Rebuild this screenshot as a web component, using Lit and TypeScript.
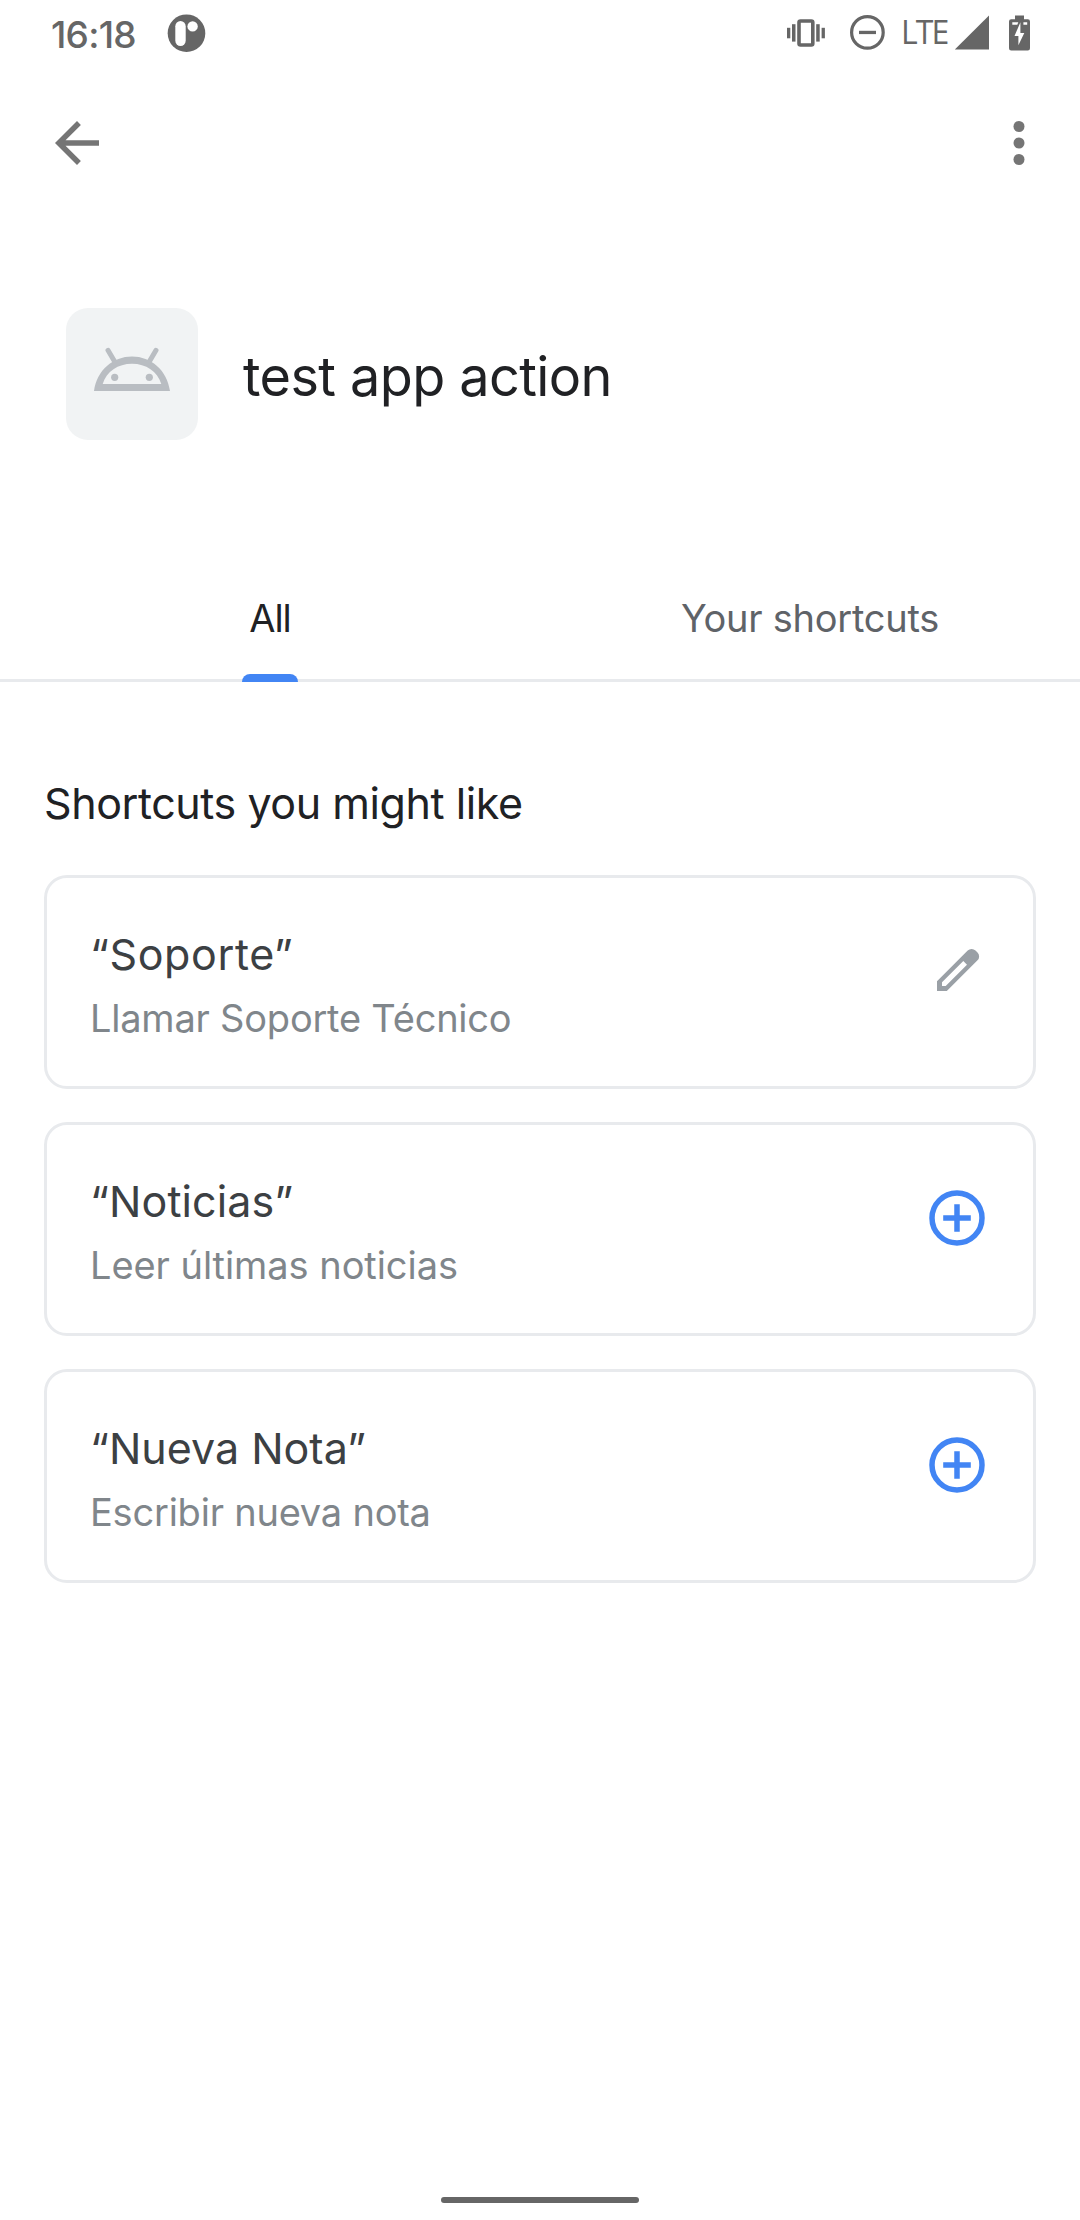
import { LitElement, html, css, svg } from "lit";
import { customElement, property, state } from "lit/decorators.js";
import { classMap } from "lit/directives/class-map.js";

interface Shortcut {
  phrase: string;
  detail: string;
  saved: boolean;
  fit: string;
}

const SHORTCUTS: Shortcut[] = [
  { phrase: "“Soporte”", detail: "Llamar Soporte Técnico", saved: true, fit: "wide" },
  { phrase: "“Noticias”", detail: "Leer últimas noticias", saved: false, fit: "normal" },
  { phrase: "“Nueva Nota”", detail: "Escribir nueva nota", saved: false, fit: "tight" },
];

@customElement("status-bar")
export class StatusBar extends LitElement {
  static styles = css`
    :host {
      display: flex;
      height: 66px;
      padding: 0 48px 0 51px;
      box-sizing: border-box;
      color: #666;
    }
    svg { display: block; fill: currentColor; }
    .side { display: flex; align-items: flex-start; }
    .end { margin-left: auto; }
    .time {
      width: 113px;
      font: 500 37px/69px Inter, "Liberation Sans", sans-serif;
      letter-spacing: -0.75px;
    }
    .dnd { margin-left: 20px; }
    .network {
      width: 51px;
      margin-left: 13px;
      font: 400 32px/63px "Open Sans", "Liberation Sans", sans-serif;
      letter-spacing: -1.9px;
      white-space: nowrap;
    }
    .battery { margin-left: 14px; }
  `;

  render() {
    return html`
      <div class="side">
        <span class="time">16:18</span>
        <svg width="46" height="66" viewBox="164 0 46 66">
          <circle cx="186.5" cy="33.2" r="18.8" />
          <rect x="175.3" y="21" width="10.4" height="25" rx="5.2" fill="#fff" />
          <circle cx="192.6" cy="26.4" r="5.2" fill="#fff" />
        </svg>
      </div>
      <div class="side end">
        <svg width="44" height="66" viewBox="784 0 44 66">
          <rect x="799" y="21" width="13.8" height="24" rx="1.5" fill="none" stroke="currentColor" stroke-width="3.6" />
          <rect x="787" y="27.8" width="3.3" height="10.5" />
          <rect x="792" y="24.2" width="3.5" height="17.4" />
          <rect x="816.2" y="24.2" width="3.5" height="17.4" />
          <rect x="821.6" y="27.8" width="3.3" height="10.5" />
        </svg>
        <svg class="dnd" width="40" height="66" viewBox="848 0 40 66">
          <circle cx="867.4" cy="32.4" r="15.8" fill="none" stroke="currentColor" stroke-width="3.2" />
          <rect x="859" y="30.8" width="17" height="3.3" />
        </svg>
        <span class="network">LTE</span>
        <svg width="40" height="66" viewBox="952 0 40 66">
          <path d="M954.8 49.5 989 15.5V49.5Z" />
        </svg>
        <svg class="battery" width="26" height="66" viewBox="1006 0 26 66">
          <path d="M1015 15.5h9v3.7h3.8q2.2 0 2.2 2.2v26.8q0 2.2-2.2 2.2h-16.6q-2.2 0-2.2-2.2V21.4q0-2.2 2.2-2.2h3.8Z" />
          <path fill="#fff" d="M1012.3 22.3h6l-1 2.4h-5ZM1023.4 22.3h3.8v2.4h-3.8ZM1020.4 22.3V33h3.9l-5.9 12.2V36h-3.9Z" />
        </svg>
      </div>
    `;
  }
}

@customElement("shortcut-card")
export class ShortcutCard extends LitElement {
  @property({ attribute: false }) item!: Shortcut;

  static styles = css`
    :host {
      display: flex;
      justify-content: space-between;
      height: 214px;
      padding: 48px 42px 0 43px;
      box-sizing: border-box;
      border: 3px solid #e8eaed;
      border-radius: 23px;
      white-space: nowrap;
    }
    .phrase { font-size: 43px; line-height: 57px; color: #3c4043; }
    .detail { margin-top: 11px; font-size: 38px; line-height: 48px; color: #80868b; }
    .phrase.wide { letter-spacing: 0.6px; }
    .phrase.normal { letter-spacing: 0.1px; }
    .detail.wide, .detail.tight { letter-spacing: -0.22px; }
    .detail.normal { letter-spacing: -0.06px; }
    .action { display: block; width: 66px; height: 66px; margin: 12px 1px 0 0; }
  `;

  private renderAction() {
    return this.item.saved
      ? svg`<path fill="#9aa0a6" fill-rule="evenodd" d="M13 53V43.2L43.7 12.5A5.5 5.5 0 0 1 51.5 12.5L53.5 14.5A5.5 5.5 0 0 1 53.5 22.3L22.8 53ZM18 48H21.7L43 26.7 39.3 23 18 44.3Z" />`
      : svg`<circle cx="33" cy="33" r="25" fill="none" stroke="#4285f4" stroke-width="5.5" />
          <path d="M33 19.2V46.8M19.2 33H46.8" stroke="#4285f4" stroke-width="5.5" />`;
  }

  render() {
    return html`
      <div>
        <div class="phrase ${this.item.fit}">${this.item.phrase}</div>
        <div class="detail ${this.item.fit}">${this.item.detail}</div>
      </div>
      <svg class="action" viewBox="0 0 66 66">${this.renderAction()}</svg>
    `;
  }
}

@customElement("app-root")
export class AppRoot extends LitElement {
  @state() private tab = 0;

  static styles = css`
    :host {
      display: flex;
      flex-direction: column;
      height: 2220px;
      background: #fff;
      color: #202124;
      font-family: Inter, "Liberation Sans", sans-serif;
    }
    .appbar { display: flex; justify-content: space-between; padding: 44px 28px 44px 44px; }
    .appbar svg { display: block; fill: #757575; }
    .hero { display: flex; align-items: center; gap: 45px; padding: 88px 66px 0; }
    .app-icon { display: flex; width: 132px; height: 132px; border-radius: 22px; background: #f1f3f4; }
    .title { margin: 6px 0 0; font-size: 54px; line-height: 72px; font-weight: 400; letter-spacing: -0.6px; }
    .tabs {
      display: grid;
      grid-template-columns: 1fr 1fr;
      height: 128px;
      margin-top: 114px;
      box-sizing: border-box;
      border-bottom: 3px solid #e8eaed;
    }
    .tab {
      position: relative;
      height: 128px;
      font-size: 38px;
      line-height: 128px;
      text-align: center;
      letter-spacing: -0.26px;
      color: #5f6368;
    }
    .tab.active { color: #202124; letter-spacing: -1px; }
    .tab.active::after {
      content: "";
      position: absolute;
      left: 50%;
      bottom: 0;
      width: 56px;
      height: 8px;
      margin-left: -28px;
      border-radius: 8px 8px 0 0;
      background: #4285f4;
    }
    .section { display: flex; flex-direction: column; padding: 93px 44px 0; }
    .heading { margin: 0 0 44px; font-size: 43px; line-height: 56px; font-weight: 400; letter-spacing: -0.43px; }
    .list { display: flex; flex-direction: column; gap: 33px; }
    .home { align-self: center; width: 198px; height: 6px; margin: auto 0 17px; border-radius: 3px; background: #666; }
  `;

  render() {
    return html`
      <status-bar></status-bar>
      <div class="appbar">
        <svg width="66" height="66" viewBox="0 0 24 24">
          <path d="M20 11H7.83l5.59-5.59L12 4l-8 8 8 8 1.41-1.41L7.83 13H20v-2z" />
        </svg>
        <svg width="66" height="66" viewBox="0 0 24 24">
          <circle cx="12" cy="6" r="2" /><circle cx="12" cy="12" r="2" /><circle cx="12" cy="18" r="2" />
        </svg>
      </div>
      <div class="hero">
        <div class="app-icon">
          <svg width="132" height="132" viewBox="66 308 132 132">
            <g fill="#b9bdc2">
              <path fill-rule="evenodd" d="M94 391C97 370 113 356.500 132 356.500S167 370 170 391ZM102.700 384H161.300C157.500 371.500 146 363.800 132 363.800S106.500 371.500 102.700 384Z" />
              <circle cx="114.7" cy="377.3" r="3.6" />
              <circle cx="149.3" cy="377.3" r="3.6" />
            </g>
            <path d="M108 350.3 114.6 361.5M156 350.3 149.4 361.5" stroke="#b9bdc2" stroke-width="5" stroke-linecap="round" />
          </svg>
        </div>
        <h1 class="title">test app action</h1>
      </div>
      <div class="tabs">
        ${["All", "Your shortcuts"].map(
          (label, i) => html`<div
            class=${classMap({ tab: true, active: this.tab === i })}
            @click=${() => (this.tab = i)}
          >${label}</div>`
        )}
      </div>
      <div class="section">
        <h2 class="heading">Shortcuts you might like</h2>
        <div class="list">
          ${SHORTCUTS.map((item) => html`<shortcut-card .item=${item}></shortcut-card>`)}
        </div>
      </div>
      <div class="home"></div>
    `;
  }
}
